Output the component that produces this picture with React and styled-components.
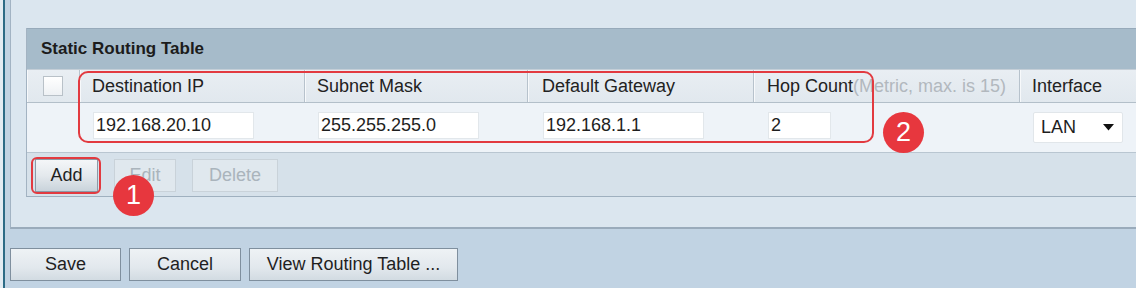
import React from "react";
import styled, { createGlobalStyle } from "styled-components";

const GlobalStyle = createGlobalStyle`
  html, body { margin: 0; padding: 0; }
  body {
    background: #c1d3e3;
    overflow: hidden;
    font-family: "Liberation Sans", Arial, sans-serif;
  }
`;

const Page = styled.div`
  position: relative;
  width: 1136px;
  height: 288px;
  display: flex;
  overflow: hidden;
  background: #c1d3e3;
`;

const EdgeLight = styled.div`
  width: 3px;
  background: #e3ecf3;
`;

const EdgeTeal = styled.div`
  width: 2px;
  background: #2c6b86;
`;

const Main = styled.div`
  flex: 1;
  padding-left: 5px;
  display: flex;
  flex-direction: column;
  min-width: 0;
`;

const Panel = styled.div`
  flex-shrink: 0;
  height: 229px;
  box-sizing: border-box;
  background: #dbe6ef;
  border-left: 1px solid #a2b3c3;
  border-bottom: 2px solid #9aabbb;
  padding: 28px 0 0 15px;
  overflow: hidden;
`;

const Table = styled.div`
  width: 1120px;
  border-left: 1px solid #a3b3c2;
  border-bottom: 1px solid #9fb0bf;
`;

const TitleBar = styled.div`
  height: 40px;
  border-top: 1px solid #97aaba;
  background: #a6bbca;
  display: flex;
  align-items: center;
  padding-left: 14px;
  font-weight: bold;
  font-size: 17px;
  color: #1c1c1c;
`;

const COLS = "53px 225px 223px 226px 266px 1fr";

const HeaderRow = styled.div`
  display: grid;
  grid-template-columns: ${COLS};
  height: 32px;
  border-bottom: 1px solid #b3bfc9;
  border-top: 1px solid #c4ced7;
  background: linear-gradient(#e9eef3, #e1e8ee);
`;

const HeadCell = styled.div`
  display: flex;
  align-items: center;
  padding-left: ${(p) => p.$pad ?? 12}px;
  border-right: 1px solid #b7c2cc;
  box-shadow: inset 1px 0 0 #f7f9fb;
  font-size: 18px;
  color: #222;
  white-space: nowrap;
  overflow: hidden;
`;

const Hint = styled.span`
  color: #b2b8be;
`;

const CheckBox = styled.div`
  width: 18px;
  height: 18px;
  border: 1px solid #b9c1c8;
  background: linear-gradient(#ffffff, #eef1f4);
  margin-left: 16px;
`;

const DataRow = styled.div`
  display: grid;
  grid-template-columns: ${COLS};
  height: 49px;
  background: #eef3f8;
  border-bottom: 1px solid #b9c6d1;
`;

const DataCell = styled.div`
  padding: 9px 0 0 ${(p) => p.$pad ?? 13}px;
`;

const TextInput = styled.div`
  width: ${(p) => p.$w}px;
  height: 27px;
  box-sizing: border-box;
  background: #fff;
  border: 1px solid #e2e7eb;
  padding-left: 2px;
  display: flex;
  align-items: center;
  font-size: 18px;
  color: #1e1e1e;
`;

const SelectBox = styled.div`
  width: 90px;
  height: 31px;
  box-sizing: border-box;
  background: #fff;
  border: 1px solid #e1e6ea;
  border-radius: 2px;
  display: flex;
  align-items: center;
  justify-content: space-between;
  padding: 0 8px 0 7px;
  font-size: 18px;
  color: #1e1e1e;
`;

const ActionRow = styled.div`
  height: 43px;
  background: #d6e1ea;
  display: flex;
  align-items: center;
  gap: 16px;
  padding-left: 8px;
  padding-top: 1px;
  box-sizing: border-box;
`;

const Button = styled.div`
  width: ${(p) => p.$w}px;
  height: 33px;
  box-sizing: border-box;
  display: flex;
  align-items: center;
  justify-content: center;
  font-size: 18px;
  color: ${(p) => (p.$disabled ? "#aab4bc" : "#1f1f1f")};
  background: ${(p) =>
    p.$disabled
      ? "#e0e8ee"
      : "linear-gradient(#f4f6f8 0%, #e4e9ed 50%, #c9d3db 100%)"};
  border: 1px solid ${(p) => (p.$disabled ? "#c9d2d9" : "#8c9aa7")};
`;

const Footer = styled.div`
  display: flex;
  gap: 8px;
  margin-top: 19px;
  flex-shrink: 0;
`;

const FooterButton = styled(Button)`
  background: linear-gradient(#eef2f5 0%, #e2e8ed 60%, #d2dbe2 100%);
  border: 1px solid #7f8f9e;
`;

const Outline = styled.div`
  position: absolute;
  left: ${(p) => p.$x}px;
  top: ${(p) => p.$y}px;
  width: ${(p) => p.$w}px;
  height: ${(p) => p.$h}px;
  box-sizing: border-box;
  border: ${(p) => p.$b || 2}px solid #e23a40;
  border-radius: ${(p) => p.$r}px;
  pointer-events: none;
`;

const Badge = styled.div`
  position: absolute;
  left: ${(p) => p.$x}px;
  top: ${(p) => p.$y}px;
  width: 41px;
  height: 41px;
  border-radius: 50%;
  background: #e7373e;
  color: #fff;
  font-size: 27px;
  display: flex;
  align-items: center;
  justify-content: center;
`;

const Arrow = () => (
  <svg width="11" height="7" viewBox="0 0 11 7">
    <path d="M0 0 H11 L5.5 6.5 Z" fill="#111" />
  </svg>
);

export default function App() {
  return (
    <>
      <GlobalStyle />
      <Page>
        <EdgeLight />
        <EdgeTeal />
        <Main>
          <Panel>
            <Table>
              <TitleBar>Static Routing Table</TitleBar>
              <HeaderRow>
                <HeadCell $pad={0}>
                  <CheckBox />
                </HeadCell>
                <HeadCell>Destination IP</HeadCell>
                <HeadCell>Subnet Mask</HeadCell>
                <HeadCell $pad={14}>Default Gateway</HeadCell>
                <HeadCell $pad={13}>
                  Hop Count<Hint>(Metric, max. is 15)</Hint>
                </HeadCell>
                <HeadCell>Interface</HeadCell>
              </HeaderRow>
              <DataRow>
                <DataCell />
                <DataCell>
                  <TextInput $w={161}>192.168.20.10</TextInput>
                </DataCell>
                <DataCell>
                  <TextInput $w={161}>255.255.255.0</TextInput>
                </DataCell>
                <DataCell $pad={15}>
                  <TextInput $w={161}>192.168.1.1</TextInput>
                </DataCell>
                <DataCell $pad={14}>
                  <TextInput $w={63}>2</TextInput>
                </DataCell>
                <DataCell>
                  <SelectBox>
                    <span>LAN</span>
                    <Arrow />
                  </SelectBox>
                </DataCell>
              </DataRow>
              <ActionRow>
                <Button $w={63}>Add</Button>
                <Button $w={62} $disabled>
                  Edit
                </Button>
                <Button $w={86} $disabled>
                  Delete
                </Button>
              </ActionRow>
            </Table>
          </Panel>
          <Footer>
            <FooterButton $w={111}>Save</FooterButton>
            <FooterButton $w={112}>Cancel</FooterButton>
            <FooterButton $w={209}>View Routing Table ...</FooterButton>
          </Footer>
        </Main>
        <Outline $x={78} $y={71} $w={796} $h={72} $r={10} $b={2.5} />
        <Outline $x={31} $y={157} $w={70} $h={37} $r={6} $b={2.5} />
        <Badge $x={113} $y={175}>1</Badge>
        <Badge $x={883} $y={112}>2</Badge>
      </Page>
    </>
  );
}
